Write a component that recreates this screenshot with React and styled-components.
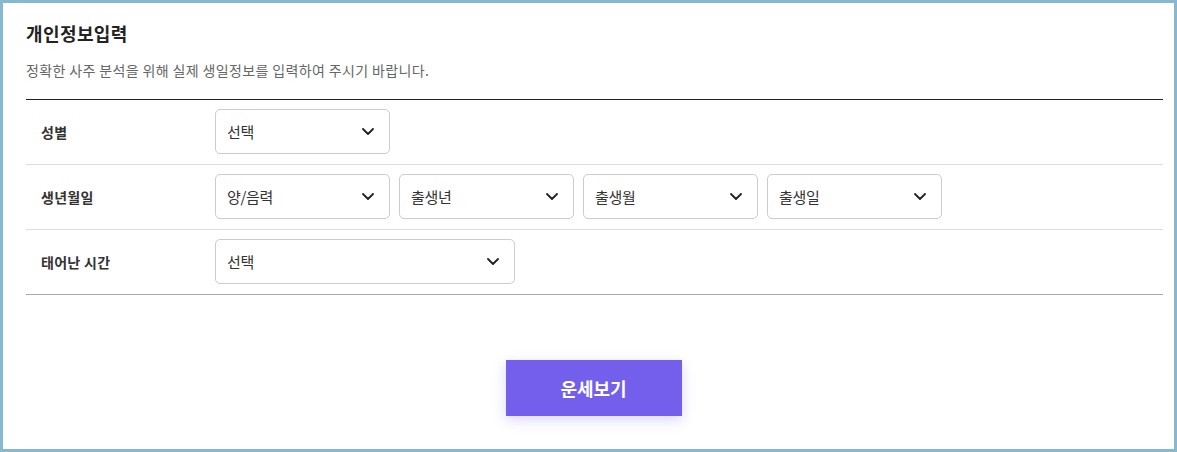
import React from "react";
import styled, { createGlobalStyle } from "styled-components";

const Global = createGlobalStyle`
  html, body { margin: 0; padding: 0; background: #fff; }
  body { font-family: "Noto Sans CJK KR", "Noto Sans", sans-serif; }
  * { box-sizing: border-box; }
`;

const Frame = styled.div`
  width: 1177px;
  height: 452px;
  border: 3px solid #86b9cf;
  background: #fff;
  padding: 16px 11px 0 23px;
  display: flex;
  flex-direction: column;
`;

const Title = styled.h2`
  margin: 0;
  font-size: 18px;
  font-weight: 700;
  color: #222;
  line-height: 28px;
  letter-spacing: 0.4px;
`;

const Desc = styled.p`
  margin: 13px 0 0;
  font-size: 14px;
  color: #666;
  line-height: 20px;
  letter-spacing: 0.37px;
`;

const Table = styled.div`
  margin-top: 19px;
  border-top: 1px solid #222;
  border-bottom: 1px solid #aaa;
  display: flex;
  flex-direction: column;
`;

const Row = styled.div`
  display: flex;
  align-items: center;
  border-top: ${(p) => (p.$first ? "none" : "1px solid #ddd")};
  height: ${(p) => (p.$first ? "64px" : "65px")};
  padding-bottom: 1px;
`;

const Label = styled.div`
  width: 189px;
  padding-left: 15px;
  font-size: 14px;
  font-weight: 700;
  color: #333;
  letter-spacing: 0.3px;
`;

const Fields = styled.div`
  display: flex;
  gap: 9px;
`;

const SelectBox = styled.div`
  width: ${(p) => p.$w || 175}px;
  height: 45px;
  border: 1px solid #ccc;
  border-radius: 5px;
  display: flex;
  align-items: center;
  justify-content: space-between;
  padding: 0 15px 0 11px;
  font-size: 15px;
  color: #333;
  letter-spacing: -0.3px;
`;

const Chevron = () => (
  <svg width="12" height="7" viewBox="0 0 12 7" fill="none">
    <path d="M1 1l5 5 5-5" stroke="#222" strokeWidth="1.8" strokeLinecap="round" strokeLinejoin="round" />
  </svg>
);

const Select = ({ text, w }) => (
  <SelectBox $w={w}>
    <span>{text}</span>
    <Chevron />
  </SelectBox>
);

const Footer = styled.div`
  display: flex;
  justify-content: center;
  padding-top: 65px;
`;

const Button = styled.button`
  width: 176px;
  height: 56px;
  border: none;
  background: #735feb;
  color: #fff;
  font-family: inherit;
  font-size: 18px;
  font-weight: 700;
  box-shadow: 0 4px 12px rgba(115, 95, 235, 0.25);
  cursor: pointer;
  margin-right: 2px;
`;

export default function App() {
  return (
    <>
      <Global />
      <Frame>
        <Title>개인정보입력</Title>
        <Desc>정확한 사주 분석을 위해 실제 생일정보를 입력하여 주시기 바랍니다.</Desc>
        <Table>
          <Row $first>
            <Label>성별</Label>
            <Fields>
              <Select text="선택" />
            </Fields>
          </Row>
          <Row>
            <Label>생년월일</Label>
            <Fields>
              <Select text="양/음력" />
              <Select text="출생년" />
              <Select text="출생월" />
              <Select text="출생일" />
            </Fields>
          </Row>
          <Row>
            <Label>태어난 시간</Label>
            <Fields>
              <Select text="선택" w={300} />
            </Fields>
          </Row>
        </Table>
        <Footer>
          <Button>운세보기</Button>
        </Footer>
      </Frame>
    </>
  );
}
